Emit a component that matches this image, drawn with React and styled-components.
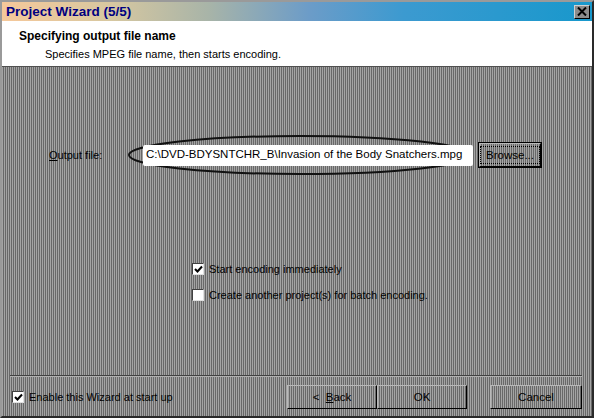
import React from 'react';
import styled, { createGlobalStyle } from 'styled-components';

const GlobalStyle = createGlobalStyle`
    html, body {
        margin: 0;
        padding: 0;
        background: #808080;
    }
    * {
        box-sizing: border-box;
    }
`;

const dither = `repeating-linear-gradient(90deg, #a4a4a4 0 1px, #686868 1px 2px)`;

const App = () => {
    return (
        <>
            <GlobalStyle />
            <Window>
                <TitleBar>
                    <span>Project Wizard (5/5)</span>
                    <CloseButton>
                        <svg width="10" height="9" viewBox="0 0 10 9">
                            <path d="M1 0.5 L9 8.5 M9 0.5 L1 8.5" stroke="#000" strokeWidth="2" />
                        </svg>
                    </CloseButton>
                </TitleBar>

                <Header>
                    <HeaderTitle>Specifying output file name</HeaderTitle>
                    <HeaderText>Specifies MPEG file name, then starts encoding.</HeaderText>
                </Header>

                <Body>
                    <FileRow>
                        <Label><u>O</u>utput file:</Label>
                        <FieldWrap>
                            <Ellipse width="350" height="42" viewBox="0 0 350 42">
                                <ellipse cx="173" cy="21" rx="171" ry="19" fill="none" stroke="#111" strokeWidth="2" />
                            </Ellipse>
                            <TextBox>C:\DVD-BDYSNTCHR_B\Invasion of the Body Snatchers.mpg</TextBox>
                        </FieldWrap>
                        <Button $default $width={62}>
                            <Focus>Browse...</Focus>
                        </Button>
                    </FileRow>

                    <Options>
                        <Check checked label="Start encoding immediately" />
                        <Check label="Create another project(s) for batch encoding." />
                    </Options>
                </Body>

                <Footer>
                    <Check checked label="Enable this Wizard at start up" />
                    <Buttons>
                        <Button $width={90}>&lt;&nbsp;&nbsp;<u>B</u>ack</Button>
                        <Button $width={90}>OK</Button>
                        <Spacer />
                        <Button $width={92}>Cancel</Button>
                    </Buttons>
                </Footer>
            </Window>
        </>
    );
};

const Check = ({ checked, label }) => (
    <CheckRow>
        <Box>
            {checked && (
                <svg width="9" height="9" viewBox="0 0 9 9">
                    <path d="M1 4 L3.5 6.5 L8 1.5" stroke="#000" strokeWidth="2" fill="none" />
                </svg>
            )}
        </Box>
        <span>{label}</span>
    </CheckRow>
);

export default App;

const Window = styled.div`
    width: 594px;
    height: 418px;
    display: flex;
    flex-direction: column;
    background: ${dither};
    border-left: 2px solid #9a9a9a;
    border-top: 2px solid #9a9a9a;
    border-right: 2px solid #2a2a2a;
    border-bottom: 2px solid #2a2a2a;
    font-family: "Liberation Sans", Arial, sans-serif;
    font-size: 11px;
    color: #000;
    overflow: hidden;
`;

const TitleBar = styled.div`
    height: 19px;
    display: flex;
    align-items: center;
    justify-content: space-between;
    padding: 0 2px 0 4px;
    background: linear-gradient(90deg, #f6c89a 0%, #d8c8a0 18%, #a8b4a8 35%, #6c9cc8 52%, #3c9ad0 68%, #1898cc 100%);
    color: #000080;
    font-weight: bold;
    font-size: 13.5px;
`;

const CloseButton = styled.div`
    width: 16px;
    height: 14px;
    display: flex;
    align-items: center;
    justify-content: center;
    background: #8c8c8c;
    border: 1px solid;
    border-color: #d0d0d0 #000 #000 #d0d0d0;
`;

const Header = styled.div`
    height: 46px;
    background: #fff;
    border-bottom: 1px solid #505050;
    padding: 8px 0 0 17px;
`;

const HeaderTitle = styled.div`
    font-weight: bold;
    font-size: 12px;
`;

const HeaderText = styled.div`
    margin-top: 5px;
    padding-left: 26px;
`;

const Body = styled.div`
    flex: 1;
    display: flex;
    flex-direction: column;
    padding: 76px 0 0 47px;
`;

const FileRow = styled.div`
    display: flex;
    align-items: center;
`;

const Label = styled.div`
    width: 94px;
`;

const FieldWrap = styled.div`
    position: relative;
    width: 336px;
    height: 21px;
    display: flex;
`;

const Ellipse = styled.svg`
    position: absolute;
    left: -16px;
    top: -11px;
    pointer-events: none;
`;

const TextBox = styled.div`
    position: relative;
    width: 330px;
    height: 21px;
    background: #fff;
    border-radius: 2px;
    padding: 3px 0 0 3px;
    white-space: nowrap;
    font-size: 11.5px;
`;

const Button = styled.div`
    width: ${(p) => p.$width}px;
    height: 24px;
    display: flex;
    align-items: center;
    justify-content: center;
    background: ${dither};
    border: 1px solid;
    border-color: #b8b8b8 #000 #000 #b8b8b8;
    box-shadow: ${(p) => (p.$default ? '0 0 0 1px #000' : 'none')};
    font-size: 11.5px;
    white-space: pre;
`;

const Focus = styled.span`
    border: 1px dotted #000;
    padding: 2px 5px;
`;

const Options = styled.div`
    display: flex;
    flex-direction: column;
    gap: 14px;
    margin: 96px 0 0 143px;
`;

const CheckRow = styled.div`
    display: flex;
    align-items: center;
    gap: 5px;
`;

const Box = styled.div`
    width: 12px;
    height: 12px;
    background: #fff;
    border: 1px solid;
    border-color: #404040 #e0e0e0 #e0e0e0 #404040;
    display: flex;
    align-items: center;
    justify-content: center;
`;

const Footer = styled.div`
    height: 41px;
    display: flex;
    align-items: center;
    justify-content: space-between;
    padding: 2px 0 0 2px;
    margin: 0 10px 0 8px;
    border-top: 1px solid #404040;
    box-shadow: inset 0 1px 0 #b0b0b0;
`;

const Buttons = styled.div`
    display: flex;
    align-items: center;
`;

const Spacer = styled.div`
    width: 23px;
`;
